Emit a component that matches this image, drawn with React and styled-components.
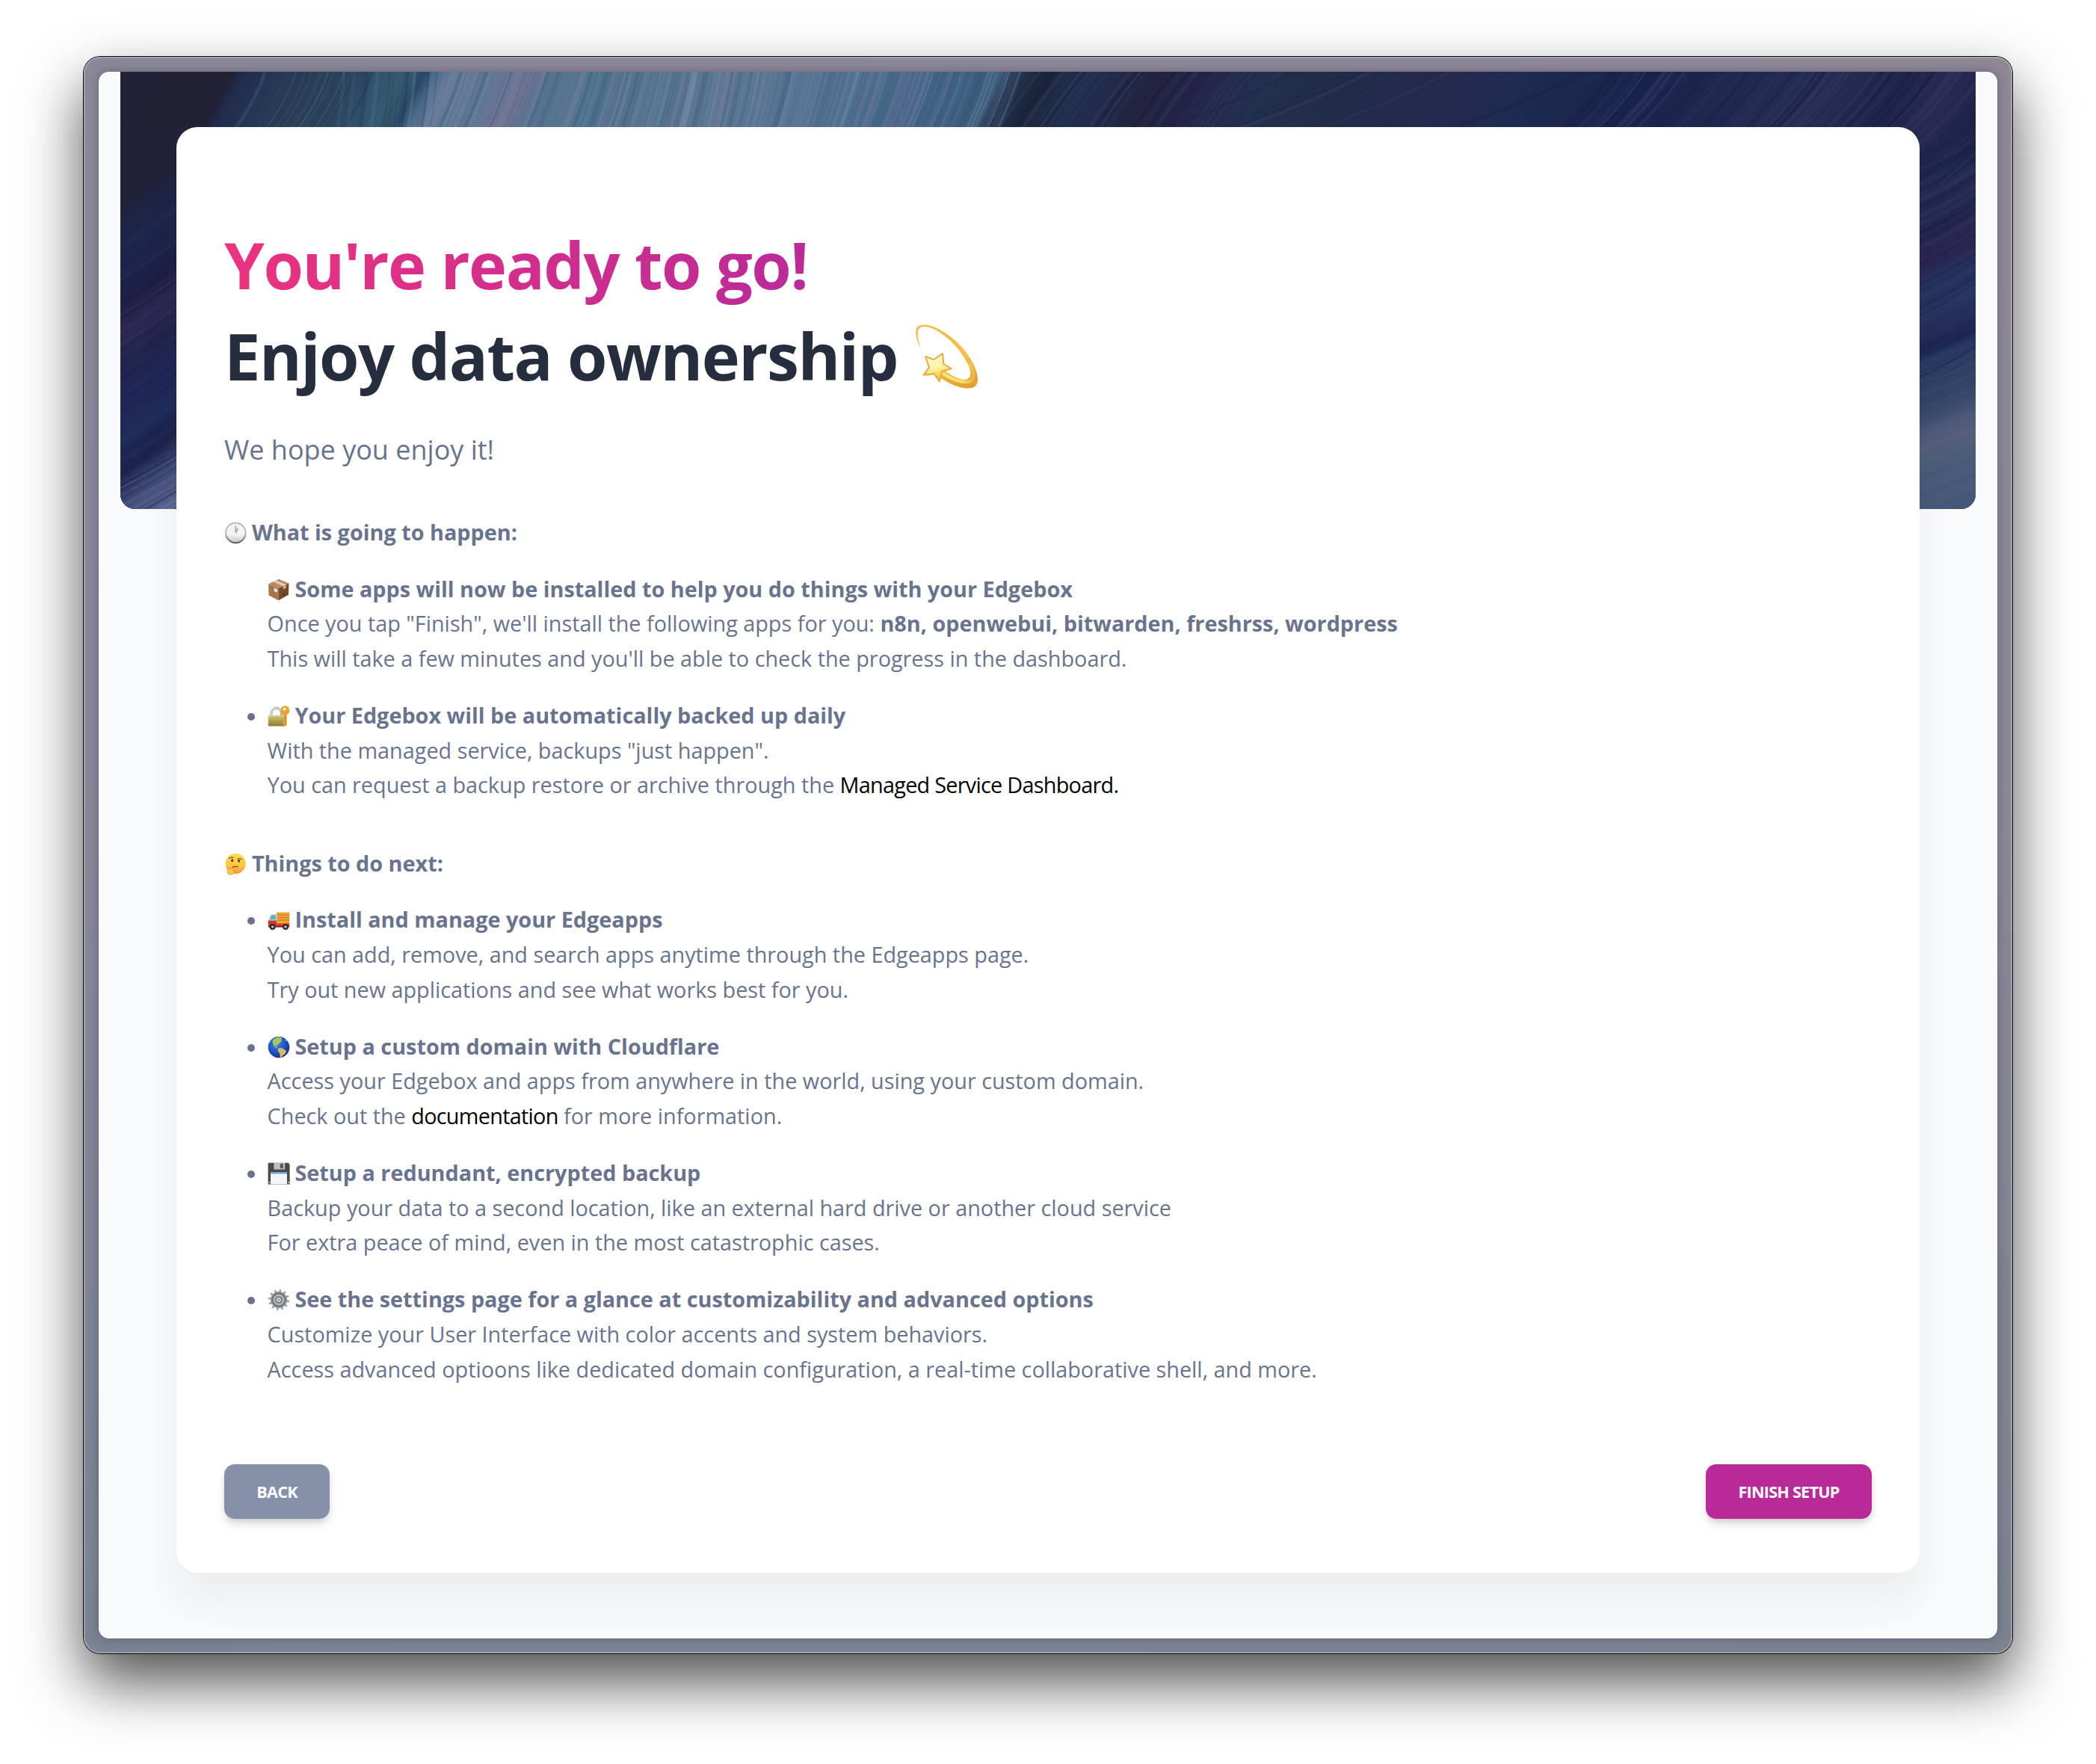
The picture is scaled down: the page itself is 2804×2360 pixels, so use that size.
import React from "react";
import styled, { createGlobalStyle } from "styled-components";

const GlobalStyle = createGlobalStyle`
  *, *::before, *::after { box-sizing: border-box; }
  html, body { margin: 0; background: #fff; }
  body { font-family: "Open Sans", "Noto Sans", sans-serif; color: #6a738d; }
`;

/* ---------- window ---------- */

const Desktop = styled.div`
  width: 2804px;
  height: 2360px;
  padding: 76px 112px 0;
  overflow: hidden;
  background: #fff;
`;

const WindowFrame = styled.div`
  height: 2136px;
  padding: 20px;
  border-radius: 22px;
  background:
    linear-gradient(90deg, rgba(124, 134, 152, 0.24), rgba(140, 134, 148, 0.12)),
    linear-gradient(180deg, #8f8898 0%, #8c8898 45%, #7b8290 100%);
  box-shadow:
    inset 0 0 0 2px rgba(190, 196, 200, 0.45),
    0 0 0 1px #0b0c0e,
    0 38px 80px rgba(0, 0, 0, 0.69);
`;

const Viewport = styled.main`
  height: 2096px;
  padding: 0 29px;
  border-radius: 14px;
  overflow: hidden;
  background: #f8fafc;
  box-shadow: 0 0 14px rgba(40, 40, 60, 0.35);
`;

const Stage = styled.div`
  display: grid;
  grid-template-columns: 75px 1fr 75px;
  grid-template-rows: 74px 1934px;
`;

const Banner = styled.div`
  grid-column: 1 / -1;
  grid-row: 1 / -1;
  height: 585px;
  border-radius: 0 0 20px 20px;
  overflow: hidden;
  background: #212746;

  svg { display: block; }
`;

const Card = styled.section`
  grid-column: 2;
  grid-row: 2;
  display: flex;
  flex-direction: column;
  padding: 123px 64px 72px;
  border-radius: 28px;
  background: #fff;
  box-shadow: 0 38px 54px rgba(0, 0, 0, 0.055);
`;

/* ---------- text ---------- */

const Title = styled.h1`
  margin: 0;
  font-size: 86.4px;
  line-height: 122px;
  font-weight: 700;
  letter-spacing: -1.5px;
  color: #262d3d;
  white-space: nowrap;
`;

const TitleAccent = styled.span`
  display: block;
  width: fit-content;
  background: linear-gradient(100deg, #ec337f 0%, #b92a99 100%);
  background-clip: text;
  -webkit-background-clip: text;
  color: transparent;
`;

const TitleLine = styled.span`
  display: block;
`;

const Lead = styled.p`
  margin: 35.5px 0 58px;
  font-size: 36px;
  line-height: 58.5px;
`;

const SectionTitle = styled.h2`
  margin: 0;
  font-size: 28.8px;
  line-height: 46.8px;
  font-weight: 700;
`;

const List = styled.ul`
  display: flex;
  flex-direction: column;
  gap: 28.8px;
  margin: 28.8px 0 0;
  padding: 0;
  list-style: none;

  & + ${SectionTitle} { margin-top: 57.6px; }
`;

const Item = styled.li`
  display: grid;
  grid-template-columns: 57.6px 1fr;
  font-size: 28.8px;
  line-height: 46.8px;
  white-space: nowrap;
`;

const Bullet = styled.span`
  width: 10px;
  height: 10px;
  margin: 20px 0 0 31px;
  border-radius: 50%;
  background: ${(p) => (p.$hidden ? "transparent" : "#6a738d")};
`;

const ItemTitle = styled.strong`
  display: block;
  font-weight: 700;
`;

const Line = styled.span`
  display: block;
`;

const Link = styled.a`
  color: #000;
  letter-spacing: -0.72px;
  text-decoration: none;
`;

const EmojiBox = styled.svg`
  width: ${(p) => p.$size}px;
  height: ${(p) => p.$size}px;
  margin-right: -0.6px;
  vertical-align: ${(p) => p.$drop}px;
  overflow: visible;
`;

/* ---------- buttons ---------- */

const Actions = styled.div`
  display: flex;
  justify-content: space-between;
  margin-top: auto;
`;

const Button = styled.button`
  width: ${(p) => p.$width}px;
  height: 73px;
  padding: 0;
  border: 0;
  border-radius: 14px;
  background: ${(p) => p.$tone};
  color: #fff;
  font: 700 21.6px/1 "Open Sans", "Noto Sans", sans-serif;
  letter-spacing: -0.75px;
  text-transform: uppercase;
  box-shadow: 0 8px 14px -2px rgba(0, 0, 0, 0.14), 0 4px 8px -2px rgba(0, 0, 0, 0.1);
`;

/* ---------- banner artwork ---------- */

const makeRandom = (seed) => () => {
  seed = (seed * 1664525 + 1013904223) % 4294967296;
  return seed / 4294967296;
};

const buildStrands = (seed, from, to, step, palette, make) => {
  const random = makeRandom(seed);
  const strands = [];
  for (let at = from; at < to; at += step * (0.4 + random() * 1.2)) {
    strands.push({
      d: make(at, random),
      color: palette[Math.floor(random() * palette.length)],
      width: 1 + random() * random() * 7,
      opacity: 0.08 + random() * 0.3,
    });
  }
  return strands;
};

const TEAL_FAINT = ["#3f6684", "#5a86a4", "#22344f", "#2b4a66"];
const TEAL_BRIGHT = ["#8896ae", "#6e9ab4", "#345872", "#2f5570", "#8280a6", "#4a7894", "#7b8ea6", "#6f6a98"];
const NAVY = ["#3a4672", "#141a38", "#41406c", "#101530", "#2c3f66"];
const STEEL = ["#7184ac", "#39456f", "#8a93b8", "#1c2550", "#56649a"];

const STRANDS = [
  ...buildStrands(7, 195, 390, 9, TEAL_FAINT, (x) => `M${x} -5 Q${x - 12} 40 ${x - 52} 90`),
  ...buildStrands(3, 300, 425, 6, TEAL_FAINT, (x) => `M${x} -5 Q${x - 3} 40 ${x - 12} 90`),
  ...buildStrands(11, 432, 1210, 3.4, TEAL_BRIGHT, (x) => {
    const lean = 38 - Math.max(0, 18 - Math.abs(x - 820) / 16);
    return `M${x} -5 Q${x - lean * 0.35} 40 ${x - lean} 90`;
  }),
  ...buildStrands(19, 1222, 1560, 8, NAVY, (x) => `M${x} -5 Q${x - 35} 35 ${x - 72} 95`),
  ...buildStrands(23, 1580, 2000, 26, NAVY, (x) => `M${x} -5 Q${x - 90} 45 ${x - 240} 95`),
  ...buildStrands(29, 2000, 2640, 9, NAVY, (x) => `M${x} -5 Q${x - 40} 60 ${x - 150} 150`),
  ...buildStrands(31, 225, 560, 7, NAVY, (y) => `M-5 ${y} Q40 ${y - 26} 85 ${y - 62}`).map((s) => ({
    ...s,
    opacity: s.opacity * 0.6,
  })),
  ...buildStrands(37, 545, 680, 4, STEEL, (y) => `M-5 ${y} Q40 ${y - 22} 85 ${y - 50}`),
  ...buildStrands(41, 90, 400, 8, NAVY, (y) => `M2395 ${y + 30} Q2445 ${y + 10} 2490 ${y - 22}`),
  ...buildStrands(43, 370, 640, 9, ["#6b7896", "#2c3d66", "#566a88", "#34507a"], (y) =>
    `M2395 ${y + 18} Q2445 ${y + 4} 2490 ${y - 18}`).map((s) => ({ ...s, opacity: s.opacity * 0.5 })),
];

const TOP_STOPS = [
  [0, "#212238"], [150, "#211f34"], [164, "#212c4a"], [230, "#283a55"], [310, "#2b4159"],
  [350, "#33536c"], [385, "#34586b"], [408, "#2c4763"], [425, "#4d6c8c"], [445, "#6a7a96"],
  [500, "#5f7894"], [550, "#70718f"], [580, "#54748e"], [820, "#5a7590"], [990, "#527190"],
  [1090, "#446488"], [1180, "#3b5b7a"], [1198, "#24364f"], [1245, "#1a2438"], [1300, "#223150"],
  [1400, "#24233f"], [1460, "#26254a"], [1540, "#21304c"], [1660, "#212b48"], [1780, "#25284c"],
  [1880, "#1e2b50"], [2050, "#18234b"], [2200, "#222a51"], [2310, "#262a50"], [2390, "#1f2349"],
  [2450, "#2b2a54"], [2520, "#1d2148"],
];

const LEFT_STOPS = [
  [0, "#212238"], [180, "#212138"], [215, "#1e2647"], [270, "#1c2349"], [320, "#211f45"],
  [350, "#2c2750"], [400, "#22244b"], [450, "#20285a"], [500, "#1f2b58"], [540, "#1a2148"],
  [565, "#303963"], [600, "#4d5883"], [650, "#5a6892"],
];

const RIGHT_STOPS = [
  [0, "#1e2247"], [130, "#222a50"], [200, "#242650"], [245, "#2a2550"], [275, "#22305a"],
  [305, "#26355f"], [345, "#242b58"], [362, "#1c2752"], [376, "#2a3b64"], [440, "#364668"],
  [468, "#4c5877"], [490, "#565f7c"], [520, "#4b5d78"], [590, "#44597a"],
];

const Stops = ({ list, length }) =>
  list.map(([at, color]) => <stop key={at} offset={at / length} stopColor={color} />);

const BannerArt = () => (
  <svg width="2482" height="585" viewBox="0 0 2482 585">
    <defs>
      <linearGradient id="sweepTop" gradientUnits="userSpaceOnUse" x1="0" y1="0" x2="2520" y2="0"
        gradientTransform="skewX(-28)">
        <Stops list={TOP_STOPS} length={2520} />
      </linearGradient>
      <linearGradient id="sweepLeft" gradientUnits="userSpaceOnUse" x1="0" y1="0" x2="0" y2="650"
        gradientTransform="skewY(-38)">
        <Stops list={LEFT_STOPS} length={650} />
      </linearGradient>
      <linearGradient id="sweepRight" gradientUnits="userSpaceOnUse" x1="0" y1="0" x2="0" y2="590"
        gradientTransform="translate(2445 0) skewY(-21)">
        <Stops list={RIGHT_STOPS} length={590} />
      </linearGradient>
      <linearGradient id="fadeDown" x1="0" y1="0" x2="0" y2="1">
        <stop offset="0.3" stopColor="#000" />
        <stop offset="1" stopColor="#fff" />
      </linearGradient>
      <mask id="rightMask">
        <rect x="2380" y="30" width="110" height="100" fill="url(#fadeDown)" />
        <rect x="2380" y="129" width="110" height="460" fill="#fff" />
      </mask>
    </defs>
    <rect width="2482" height="585" fill="url(#sweepTop)" />
    <rect y="72" width="110" height="513" fill="url(#sweepLeft)" />
    <rect x="2380" width="102" height="585" fill="url(#sweepRight)" mask="url(#rightMask)" />
    <g fill="none">
      {STRANDS.map((s, i) => (
        <path key={i} d={s.d} stroke={s.color} strokeWidth={s.width} opacity={s.opacity} />
      ))}
    </g>
  </svg>
);

/* ---------- emoji ---------- */

const Emoji = ({ children }) => (
  <EmojiBox $size={30} $drop={-5} viewBox="0 0 30 30">{children}</EmojiBox>
);

const ClockEmoji = () => (
  <Emoji>
    <defs>
      <linearGradient id="clockRim" x1="0" y1="0" x2="0" y2="1">
        <stop offset="0" stopColor="#a3b2c6" />
        <stop offset="0.5" stopColor="#b9bcc0" />
        <stop offset="1" stopColor="#56585b" />
      </linearGradient>
      <linearGradient id="clockFace" x1="0" y1="0" x2="0" y2="1">
        <stop offset="0" stopColor="#f4f5f7" />
        <stop offset="0.6" stopColor="#f3f3f3" />
        <stop offset="1" stopColor="#c9c9c9" />
      </linearGradient>
    </defs>
    <circle cx="15.3" cy="15" r="14.3" fill="url(#clockRim)" />
    <circle cx="15.3" cy="14.8" r="12.3" fill="url(#clockFace)" />
    <path d="M15.3 5v10l3-6.2" fill="none" stroke="#a0a0a3" strokeWidth="1.5" />
  </Emoji>
);

const PackageEmoji = () => (
  <Emoji>
    <path d="M1.2 7.2 15 .8l13.4 5.6L14.6 13z" fill="#b98b62" />
    <path d="M1.2 7.2 14.6 13v16.2L1.5 22.6z" fill="#a57448" />
    <path d="M14.6 13 28.4 6.4 28 21.8 14.6 29.2z" fill="#75492a" />
    <path d="m7.6 4.2 4-1.8 13.2 5.8-4 2z" fill="#e0cdb6" />
    <path d="m20.8 10.2 4-2v4.4l-4 2.2z" fill="#c9a988" />
    <path d="m8.6 12.4 4.4 2v4.4l-4.4-1.8z" fill="#e3e4ea" />
    <path d="m20 21.6 2.2.6 1-2" fill="none" stroke="#452a17" strokeWidth="1.1" />
  </Emoji>
);

const LockEmoji = () => (
  <Emoji>
    <defs>
      <linearGradient id="lockBody" x1="0" y1="0" x2="0" y2="1">
        <stop offset="0" stopColor="#ddd08a" />
        <stop offset="0.5" stopColor="#b5a552" />
        <stop offset="1" stopColor="#8b7a35" />
      </linearGradient>
    </defs>
    <path d="M5 16V10.5a7 8 0 0 1 13.6 0V16" fill="none" stroke="#a2b2c6" strokeWidth="3.2" />
    <path d="M5 15V10.5a7 8 0 0 1 13.6 0" fill="none" stroke="#d5dee8" strokeWidth="1.2" />
    <rect x=".8" y="14" width="22.6" height="14.6" rx="1.2" fill="url(#lockBody)" />
    <path d="M1 18h22M1 21.5h22M1 25h22" stroke="#8f8140" strokeWidth=".7" opacity=".6" />
    <path fillRule="evenodd" d="M22.6 1.2a6.4 6.4 0 0 1 3 12.2V27l-2.4 2-1.6-1.4v-2.2l-2-1.4 2-1.6v-2l-1.8-1.5 1.8-1.5V13.4A6.4 6.4 0 0 1 22.6 1.2zm0 2.6a1.9 1.9 0 1 0 0 3.8 1.9 1.9 0 0 0 0-3.8z" fill="#e6a62e" />
    <path d="M24 14v12.6" stroke="#b87a18" strokeWidth="1" />
  </Emoji>
);

const ThinkingEmoji = () => (
  <Emoji>
    <defs>
      <linearGradient id="thinkSkin" x1="0" y1="0" x2="0" y2="1">
        <stop offset="0" stopColor="#fbdb4f" />
        <stop offset="0.6" stopColor="#fbc742" />
        <stop offset="1" stopColor="#ee9a2c" />
      </linearGradient>
    </defs>
    <circle cx="15.2" cy="14.4" r="13.5" fill="url(#thinkSkin)" />
    <path d="M6.6 7.6q2.4-2.6 5.4-1.2M18 8.2q3-1.6 5.2.4" fill="none" stroke="#7b4a1a" strokeWidth="1.2" strokeLinecap="round" />
    <ellipse cx="10.6" cy="10.3" rx="1.5" ry="2" fill="#5d3410" />
    <ellipse cx="19.6" cy="10.8" rx="1.5" ry="2" fill="#5d3410" />
    <path d="M11 19.4q4-2 7.4-.8" fill="none" stroke="#7b4a1a" strokeWidth="1.2" strokeLinecap="round" />
    <path d="M5 20.4c1.4-1.4 2.4-.4 2.6 1.2l6.6-1.6c2-.3 2.2 1.8.6 2.2l-3.2 1.2c2 .2 2.4 4.800-1.200 5.400-3.600.6-6.400-.4-6.400-4.400z" fill="#fbc84c" stroke="#e58a2a" strokeWidth=".8" />
  </Emoji>
);

const TruckEmoji = () => (
  <Emoji>
    <path d="M11.8 4.6h17.4V21H11.8z" fill="#f0a434" />
    <path d="M12 8h17M12 11.5h17M12 15h17" stroke="#c9761c" strokeWidth="1" />
    <path d="M4.4 7h8.2v15H1V15z" fill="#c9d6dc" />
    <path d="M5.2 8.4h5.6v5.8H3z" fill="#58b3c4" />
    <path d="M.8 15.6h11.4v4h17v3.6H.8z" fill="#d9341f" />
    <path d="M1 23h28v1.6H1z" fill="#7c1a12" />
    <circle cx="6.6" cy="24" r="3.9" fill="#2b2b2d" />
    <circle cx="6.6" cy="24" r="1.8" fill="#b9bdc2" />
    <circle cx="24" cy="24" r="3.9" fill="#2b2b2d" />
    <circle cx="24" cy="24" r="1.8" fill="#b9bdc2" />
  </Emoji>
);

const GlobeEmoji = () => (
  <Emoji>
    <defs>
      <radialGradient id="ocean" cx=".4" cy=".35" r=".7">
        <stop offset="0" stopColor="#3f86ea" />
        <stop offset="0.6" stopColor="#1f4fc4" />
        <stop offset="1" stopColor="#122a78" />
      </radialGradient>
    </defs>
    <circle cx="15" cy="15" r="14.3" fill="url(#ocean)" />
    <path d="M6.4 6.2C8.600 3.200 12.600 1.600 16 1.600l4 1.400-2 2 1.200 2-4 2.800-2 3-2.200-.6-1 1.200 2.600 1.200.6 2-3.800-2-2.200-4z" fill="#a8c65c" />
    <path d="M22.400 4.200 26 6.600 24 7z" fill="#a8c65c" />
    <path d="m14.400 16.400 4.600-.4 6.200 4-2 4-3 2-1.400 2.600-1.800.2-.6-5-2.800-4z" fill="#d2bd62" />
  </Emoji>
);

const FloppyEmoji = () => (
  <Emoji>
    <path d="M.6.8h27l2 2.200v26.400H.6z" fill="#48494b" />
    <path d="M8.400.8h14.800v8.800H8.400z" fill="#bcbfc3" />
    <path d="M16.800 1.800h4v6.400h-4z" fill="#55575a" />
    <path d="M4 13.600h22v15.800H4z" fill="#f3f5f8" />
    <path d="M4 13.600h22v2H4z" fill="#6bb1e8" />
    <path d="M1.600 26h1.600v2H1.600zM27 26h1.600v2H27z" fill="#c9cbcd" />
  </Emoji>
);

const TEETH = Array.from({ length: 12 }, (_, i) => i * 30);

const GearEmoji = () => (
  <Emoji>
    {TEETH.map((angle) => (
      <path key={angle} d="M13.4 5 14.3.7h1.6L16.800 5z" fill="#9a9ea3" transform={`rotate(${angle + 8} 15 15)`} />
    ))}
    <circle cx="15" cy="15" r="11" fill="#94989c" />
    <circle cx="15" cy="15" r="8.600" fill="none" stroke="#6b7074" strokeWidth="1.600" />
    <circle cx="15" cy="15" r="6.400" fill="none" stroke="#b9bdc0" strokeWidth="1.600" />
    <circle cx="15" cy="15" r="4.200" fill="#777b7f" />
    <circle cx="15" cy="15" r="2.700" fill="#e6e8ea" />
    <circle cx="15" cy="15" r="1" fill="#4b4e51" />
  </Emoji>
);

const DizzyEmoji = () => (
  <EmojiBox $size={90} $drop={-13} viewBox="21 21 270 270">
    <defs>
      <linearGradient id="trail" x1="0.3" y1="0" x2="0.7" y2="1">
        <stop offset="0" stopColor="#f3bb4a" />
        <stop offset="0.6" stopColor="#f3c04d" />
        <stop offset="1" stopColor="#e0a032" />
      </linearGradient>
      <linearGradient id="trailShine" gradientUnits="userSpaceOnUse" x1="140" y1="220" x2="275" y2="200">
        <stop offset="0" stopColor="#f9e27a" />
        <stop offset="0.5" stopColor="#fbe06a" />
        <stop offset="1" stopColor="#f6cf55" stopOpacity="0.2" />
      </linearGradient>
      <linearGradient id="starFill" x1="0.4" y1="0" x2="0.6" y2="1">
        <stop offset="0" stopColor="#fdf8dc" />
        <stop offset="0.5" stopColor="#fdf2a6" />
        <stop offset="0.75" stopColor="#f6d650" />
        <stop offset="1" stopColor="#ecb93a" />
      </linearGradient>
    </defs>
    <path d="M51 122C36 98 27 66 32 46C38 24 76 22 116 42C186 78 242 138 266 196C282 234 284 262 268 276C246 292 190 284 128 240L140 208C172 234 214 254 236 248C256 240 252 212 238 184C212 132 162 78 112 50C78 32 46 30 40 50C34 68 42 98 51 122Z" fill="url(#trail)" />
    <path d="M142 224C176 250 224 264 248 256C270 246 262 214 248 184" fill="none" stroke="url(#trailShine)" strokeWidth="13" strokeLinecap="round" />
    <path d="M69 156 103 168 138 144 142 186 173 205 136 215 125 256 105 226 62 230 84 200Z" fill="url(#starFill)" stroke="#e6ab45" strokeWidth="6" strokeLinejoin="round" />
  </EmojiBox>
);

/* ---------- page ---------- */

const Entry = ({ icon: Icon, title, plain, children }) => (
  <Item>
    <Bullet $hidden={plain} />
    <div>
      <ItemTitle><Icon /> {title}</ItemTitle>
      {children}
    </div>
  </Item>
);

export default function App() {
  return (
    <>
      <GlobalStyle />
      <Desktop>
        <WindowFrame>
          <Viewport>
            <Stage>
              <Banner><BannerArt /></Banner>
              <Card>
                <Title>
                  <TitleAccent>You're ready to go!</TitleAccent>
                  <TitleLine>Enjoy data ownership <DizzyEmoji /></TitleLine>
                </Title>
                <Lead>We hope you enjoy it!</Lead>

                <SectionTitle><ClockEmoji /> What is going to happen:</SectionTitle>
                <List>
                  <Entry icon={PackageEmoji} plain title="Some apps will now be installed to help you do things with your Edgebox">
                    <Line>
                      Once you tap "Finish", we'll install the following apps for you:{" "}
                      <b>n8n, openwebui, bitwarden, freshrss, wordpress</b>
                    </Line>
                    <Line>This will take a few minutes and you'll be able to check the progress in the dashboard.</Line>
                  </Entry>
                  <Entry icon={LockEmoji} title="Your Edgebox will be automatically backed up daily">
                    <Line>With the managed service, backups "just happen".</Line>
                    <Line>
                      You can request a backup restore or archive through the <Link>Managed Service Dashboard.</Link>
                    </Line>
                  </Entry>
                </List>

                <SectionTitle><ThinkingEmoji /> Things to do next:</SectionTitle>
                <List>
                  <Entry icon={TruckEmoji} title="Install and manage your Edgeapps">
                    <Line>You can add, remove, and search apps anytime through the Edgeapps page.</Line>
                    <Line>Try out new applications and see what works best for you.</Line>
                  </Entry>
                  <Entry icon={GlobeEmoji} title="Setup a custom domain with Cloudflare">
                    <Line>Access your Edgebox and apps from anywhere in the world, using your custom domain.</Line>
                    <Line>Check out the <Link>documentation</Link> for more information.</Line>
                  </Entry>
                  <Entry icon={FloppyEmoji} title="Setup a redundant, encrypted backup">
                    <Line>Backup your data to a second location, like an external hard drive or another cloud service</Line>
                    <Line>For extra peace of mind, even in the most catastrophic cases.</Line>
                  </Entry>
                  <Entry icon={GearEmoji} title="See the settings page for a glance at customizability and advanced options">
                    <Line>Customize your User Interface with color accents and system behaviors.</Line>
                    <Line>
                      Access advanced optioons like dedicated domain configuration, a real-time collaborative shell, and more.
                    </Line>
                  </Entry>
                </List>

                <Actions>
                  <Button $width={141} $tone="#8691a9">Back</Button>
                  <Button $width={222} $tone="#b92a99">Finish setup</Button>
                </Actions>
              </Card>
            </Stage>
          </Viewport>
        </WindowFrame>
      </Desktop>
    </>
  );
}
